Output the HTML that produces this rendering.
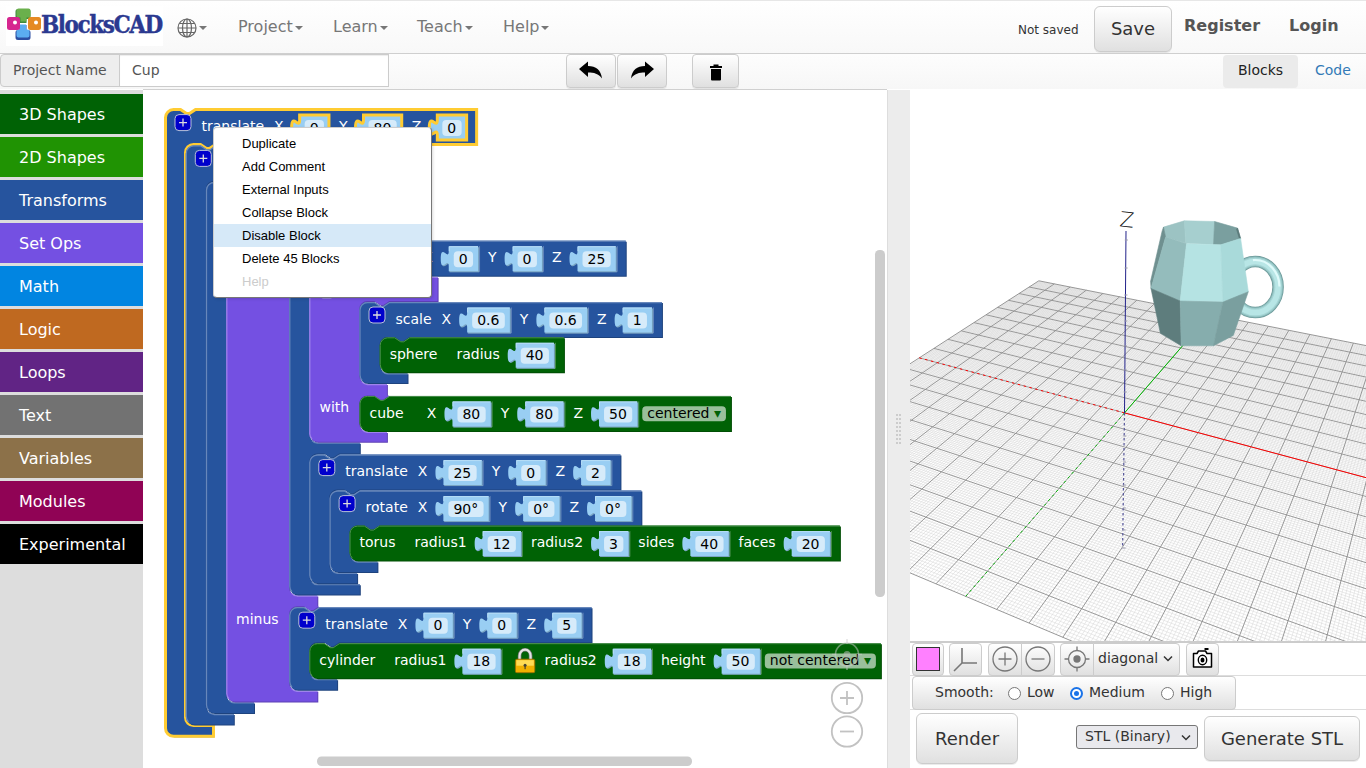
<!DOCTYPE html>
<html><head><meta charset="utf-8"><title>BlocksCAD</title>
<style>
*{box-sizing:border-box}
html,body{margin:0;padding:0;width:1366px;height:768px;overflow:hidden;background:#fff;font-family:"DejaVu Sans","Liberation Sans",sans-serif;font-size:14px;color:#333}
.abs{position:absolute}
#nav{position:absolute;left:0;top:0;width:1366px;height:54px;background:linear-gradient(#fff,#f8f8f8);border-top:1px solid #e7e7e7;border-bottom:1px solid #cfcfcf;box-shadow:0 1px 2px rgba(0,0,0,.12)}
#logo{position:absolute;left:6px;top:5px;width:157px;height:40px;background:#fff}
#logo .t{position:absolute;left:35px;top:4px;font-family:"DejaVu Serif Condensed","DejaVu Serif","Liberation Serif",serif;font-weight:bold;font-size:24px;letter-spacing:-1.45px;color:#2b3990;-webkit-text-stroke:.4px #2b3990;line-height:30px;white-space:nowrap}
.nv{position:absolute;top:15px;font-size:16px;color:#777;line-height:22px;white-space:nowrap}
.caret{display:inline-block;width:0;height:0;border-left:4px solid transparent;border-right:4px solid transparent;border-top:4px solid #777;vertical-align:middle;margin-left:2px}
.nb{position:absolute;top:14px;font-size:16px;font-weight:bold;color:#555;line-height:22px}
.btn{position:absolute;border:1px solid #ccc;border-radius:4px;background:linear-gradient(#fff,#e0e0e0);box-shadow:0 1px 0 rgba(0,0,0,.08);color:#333;text-align:center}
#bar2{position:absolute;left:0;top:54px;width:1366px;height:35px;background:linear-gradient(#fdfdfd,#f7f7f7)}
#pn{position:absolute;left:0;top:0px;width:120px;height:33px;border:1px solid #ccc;border-radius:4px 0 0 4px;background:#eee;color:#555;font-size:14px;line-height:31px;padding-left:12px}
#pi{position:absolute;left:119px;top:0px;width:270px;height:33px;border:1px solid #ccc;background:#fff;color:#555;font-size:14px;line-height:31px;padding-left:12px;box-shadow:inset 0 1px 1px rgba(0,0,0,.075)}
#main{position:absolute;left:0;top:90px;width:1366px;height:678px}
#side{position:absolute;left:0;top:0;width:143px;height:678px;background:#ddd}
.cat{position:absolute;left:0;width:143px;height:40px;color:#fff;font-size:16px;line-height:42px;padding-left:19px;overflow:hidden}
#ws{position:absolute;left:143px;top:-1px;width:744px;height:679px;background:#fff;overflow:hidden;border-top:1px solid #d0d0d0}
#div{position:absolute;left:887px;top:0;width:23px;height:678px;background:#ececec;border-left:1px solid #ddd}
#v3{position:absolute;left:910px;top:0;width:456px;height:552px;background:#fff;overflow:hidden}
.bt{font-family:"DejaVu Sans","Liberation Sans",sans-serif;font-size:14px}
#menu{position:absolute;left:213px;top:127px;width:219px;height:171px;background:#fff;border:1px solid #ccc;border-right-color:#777;border-bottom-color:#777;border-radius:4px;padding:4px 0;font-family:"Liberation Sans",sans-serif;font-size:13px;color:#000;box-shadow:1px 1px 3px rgba(0,0,0,.15)}
.mi{height:23px;line-height:23px;padding-left:28px;white-space:nowrap}
.mi.hl{background:#d6e9f8}
.mi.dis{color:#ccc}
#tb{position:absolute;left:910px;top:551px;width:456px;height:35px;border-top:2px solid #ccc;border-bottom:1px solid #ddd;background:#fff}
.tbtn{position:absolute;top:0px;height:33px;border:1px solid #ccc;background:linear-gradient(#fff,#e0e0e0);border-radius:4px}
#sm{position:absolute;left:912px;top:586px;width:324px;height:34px;border:1px solid #ccc;border-radius:4px;background:linear-gradient(#fff,#e0e0e0);font-size:14px;color:#333}
#sm span{position:absolute;top:6px;line-height:18px}
.radio{position:absolute;top:10px;width:13px;height:13px;border-radius:50%;border:1.5px solid #777;background:#fff}
.radio.on{border:2px solid #1a73e8}
.radio.on:after{content:"";position:absolute;left:2px;top:2px;width:5px;height:5px;border-radius:50%;background:#1a73e8}
select,.sel{position:absolute;font-family:"DejaVu Sans","Liberation Sans",sans-serif;font-size:14px;color:#333}
</style></head><body>
<div id="nav">
 <div id="logo">
  <svg class="abs" style="left:0;top:0" width="40" height="40" viewBox="0 0 40 40">
   <path d="M9.5 5.5 q0-2.5 2.5-2.5 h10 q2.5 0 2.5 2.5 v5 q0 2.5-2.5 2.5 h-1.5 v4 h-7 v-4 h-1.5 q-2.5 0-2.5-2.5z" fill="#3f8a3a"/>
   <path d="M10.5 4.5 q0-2 2-2 h10 q2 0 2 2 v5 q0 2-2 2 h-2 v4 h-6 v-4 h-2 q-2 0-2-2z" fill="#6ab04c"/>
   <path d="M9.5 31.5 q0 2.5 2.5 2.5 h10 q2.5 0 2.5-2.5 v-5 q0-2.5-2.5-2.5 h-1.5 v-5 h-7 v5 h-1.5 q-2.5 0-2.5 2.5z" fill="#2c4ea2"/>
   <path d="M10.5 29.5 q0 2 2 2 h9 q2 0 2-2 v-4 q0-2-2-2 h-1.5 v-5 h-6 v5 h-1.5 q-2 0-2 2z" fill="#5badf0"/>
   <rect x="1" y="11" width="13" height="13" rx="2.5" fill="#d6258f"/>
   <rect x="22" y="11" width="13" height="13" rx="2.5" fill="#e58a23"/>
   <circle cx="9" cy="16.5" r="2" fill="#fff"/><circle cx="30" cy="16.5" r="2" fill="#fff"/>
  </svg>
  <div class="t">BlocksCAD</div>
 </div>
 <svg class="abs" style="left:177px;top:17px" width="20" height="20" viewBox="0 0 20 20" fill="none" stroke="#666" stroke-width="1.2">
  <circle cx="10" cy="10" r="9"/><ellipse cx="10" cy="10" rx="4.5" ry="9"/><path d="M10 1v18M1 10h18M2.5 5.5h15M2.5 14.5h15"/>
 </svg>
 <span class="caret abs" style="left:199px;top:25px;margin:0"></span>
 <div class="nv" style="left:238px">Project<span class="caret"></span></div>
 <div class="nv" style="left:333px">Learn<span class="caret"></span></div>
 <div class="nv" style="left:417px">Teach<span class="caret"></span></div>
 <div class="nv" style="left:503px">Help<span class="caret"></span></div>
 <div class="abs" style="left:1018px;top:21px;font-size:12px;color:#333;line-height:16px">Not saved</div>
 <div class="btn" style="left:1094px;top:5px;width:78px;height:46px;border-radius:6px;font-size:18px;line-height:44px">Save</div>
 <div class="nb" style="left:1184px">Register</div>
 <div class="nb" style="left:1289px">Login</div>
</div>
<div id="bar2">
 <div id="pn">Project Name</div><div id="pi">Cup</div>
 <div class="btn" style="left:566px;top:0px;width:50px;height:34px">
  <svg width="30" height="22" viewBox="0 0 30 22" style="margin-top:5px"><path d="M3 9 L12 1.5 V6 C20 6 25 10 26 18.5 C22.5 13.5 18 12.5 12 12.5 V17 Z" fill="#000"/></svg></div>
 <div class="btn" style="left:617px;top:0px;width:50px;height:34px">
  <svg width="30" height="22" viewBox="0 0 30 22" style="margin-top:5px"><path d="M27 9 L18 1.5 V6 C10 6 5 10 4 18.5 C7.5 13.5 12 12.5 18 12.5 V17 Z" fill="#000"/></svg></div>
 <div class="btn" style="left:692px;top:0px;width:47px;height:34px">
  <svg width="14" height="18" viewBox="0 0 14 18" style="margin-top:8px"><path d="M1 3h12v2H1zM4.5 1.5h5v2h-5zM2 6h10v10.5q0 1-1 1H3q-1 0-1-1z" fill="#000"/></svg></div>
 <div class="abs" style="left:1223px;top:1px;width:75px;height:33px;background:#ebebeb;border-radius:4px;color:#222;font-size:14px;line-height:31px;text-align:center">Blocks</div>
 <div class="abs" style="left:1315px;top:1px;font-size:14px;line-height:31px;color:#337ab7">Code</div>
</div>
<div id="main">
 <div id="side">
 <div class="cat" style="top:4px;background:#006205">3D Shapes</div>
<div class="cat" style="top:47px;background:#209303">2D Shapes</div>
<div class="cat" style="top:90px;background:#26549E">Transforms</div>
<div class="cat" style="top:133px;background:#7450E2">Set Ops</div>
<div class="cat" style="top:176px;background:#0185E1">Math</div>
<div class="cat" style="top:219px;background:#BF6920">Logic</div>
<div class="cat" style="top:262px;background:#612485">Loops</div>
<div class="cat" style="top:305px;background:#727272">Text</div>
<div class="cat" style="top:348px;background:#8C7149">Variables</div>
<div class="cat" style="top:391px;background:#900355">Modules</div>
<div class="cat" style="top:434px;background:#000">Experimental</div>
 </div>
 <div id="ws">
  <svg class="abs" style="left:-143px;top:-90px" width="1030" height="768" viewBox="0 0 1030 768">
  <path d="M 165.5 117.6 A 8 8 0 0 1 173.5 109.6 H 180.5 l 6,4 3,0 6,-4 H 476.63 V 144.4 H 215.5 l -6,4 -3,0 -6,-4 H 193.5 a 8 8 0 0 0 -8 8 v 565.2 a 8 8 0 0 0 8 8 H 213.5 V 736.2 H 173.5 a 8 8 0 0 1 -8 -8 z" fill="#1e437e" transform="translate(1,1)"/>
<path d="M 165.5 117.6 A 8 8 0 0 1 173.5 109.6 H 180.5 l 6,4 3,0 6,-4 H 476.63 V 144.4 H 215.5 l -6,4 -3,0 -6,-4 H 193.5 a 8 8 0 0 0 -8 8 v 565.2 a 8 8 0 0 0 8 8 H 213.5 V 736.2 H 173.5 a 8 8 0 0 1 -8 -8 z" fill="#26549E" stroke="#fc3" stroke-width="3"/>
<rect x="175" y="114.6" width="16" height="16" rx="4" ry="4" fill="#00c" stroke="#b8c0d8" stroke-width="1"/><path d="M 179 122.6 h 8 M 183 118.6 v 8" stroke="#ddd" stroke-width="1.3" fill="none"/>
<text x="201.5" y="131.3" class="bt" fill="#fff">translate</text>
<text x="274.06" y="131.3" class="bt" fill="#fff">X</text>
<path d="M 299.65 115.1 H 328.96 V 140.1 H 299.65 V 135.1 c 0,-10 -8,8 -8,-7.5 s 8,2.5 8,-7.5 z" fill="#7aa5c2" transform="translate(1,1)"/>
<path d="M 299.65 115.1 H 328.96 V 140.1 H 299.65 V 135.1 c 0,-10 -8,8 -8,-7.5 s 8,2.5 8,-7.5 z" fill="#99CEF3" stroke="#fc3" stroke-width="3"/>
<rect x="304.65" y="120.1" width="19.31" height="16" rx="4" ry="4" fill="#fff" fill-opacity=".6"/>
<text x="309.65" y="132.6" class="bt" fill="#000">0</text>
<text x="338.96" y="131.3" class="bt" fill="#fff">Y</text>
<path d="M 363.51 115.1 H 401.73 V 140.1 H 363.51 V 135.1 c 0,-10 -8,8 -8,-7.5 s 8,2.5 8,-7.5 z" fill="#7aa5c2" transform="translate(1,1)"/>
<path d="M 363.51 115.1 H 401.73 V 140.1 H 363.51 V 135.1 c 0,-10 -8,8 -8,-7.5 s 8,2.5 8,-7.5 z" fill="#99CEF3" stroke="#fc3" stroke-width="3"/>
<rect x="368.51" y="120.1" width="28.21" height="16" rx="4" ry="4" fill="#fff" fill-opacity=".6"/>
<text x="373.51" y="132.6" class="bt" fill="#000">80</text>
<text x="411.73" y="131.3" class="bt" fill="#fff">Z</text>
<path d="M 437.32 115.1 H 466.63 V 140.1 H 437.32 V 135.1 c 0,-10 -8,8 -8,-7.5 s 8,2.5 8,-7.5 z" fill="#7aa5c2" transform="translate(1,1)"/>
<path d="M 437.32 115.1 H 466.63 V 140.1 H 437.32 V 135.1 c 0,-10 -8,8 -8,-7.5 s 8,2.5 8,-7.5 z" fill="#99CEF3" stroke="#fc3" stroke-width="3"/>
<rect x="442.32" y="120.1" width="19.31" height="16" rx="4" ry="4" fill="#fff" fill-opacity=".6"/>
<text x="447.32" y="132.6" class="bt" fill="#000">0</text>
<path d="M 185.8 153.4 A 8 8 0 0 1 193.8 145.4 H 200.8 l 6,4 3,0 6,-4 H 325.8 V 181 H 235.8 l -6,4 -3,0 -6,-4 H 213.8 a 8 8 0 0 0 -8 8 v 517 a 8 8 0 0 0 8 8 H 233.8 V 724.6 H 193.8 a 8 8 0 0 1 -8 -8 z" fill="#1e437e" transform="translate(1,1)"/>
<path d="M 185.8 153.4 A 8 8 0 0 1 193.8 145.4 H 200.8 l 6,4 3,0 6,-4 H 325.8 V 181 H 235.8 l -6,4 -3,0 -6,-4 H 213.8 a 8 8 0 0 0 -8 8 v 517 a 8 8 0 0 0 8 8 H 233.8 V 724.6 H 193.8 a 8 8 0 0 1 -8 -8 z" fill="#26549E"/>
<path d="M 186.3 153.4 A 7.5 7.5 0 0 1 193.8 145.9 H 200.8 l 6,4 3,0 6,-4 H 325.8 M 208.5 711.8 A 7.5 7.5 0 0 0 213.8 714.5 H 233.8 M 186.3 153.4 V 716.6 A 7.5 7.5 0 0 0 188.5 721.9" fill="none" stroke="#6787bb" stroke-width="1.25"/>
<rect x="195.3" y="150.4" width="16" height="16" rx="4" ry="4" fill="#00c" stroke="#b8c0d8" stroke-width="1"/><path d="M 199.3 158.4 h 8 M 203.3 154.4 v 8" stroke="#ddd" stroke-width="1.3" fill="none"/>
<text x="221.8" y="161.9" class="bt" fill="#fff">color</text>
<path d="M 206 190 A 8 8 0 0 1 214 182 H 221 l 6,4 3,0 6,-4 H 316 V 217 H 256 l -6,4 -3,0 -6,-4 H 234 a 8 8 0 0 0 -8 8 v 469.4 a 8 8 0 0 0 8 8 H 254 V 713 H 214 a 8 8 0 0 1 -8 -8 z" fill="#1e437e" transform="translate(1,1)"/>
<path d="M 206 190 A 8 8 0 0 1 214 182 H 221 l 6,4 3,0 6,-4 H 316 V 217 H 256 l -6,4 -3,0 -6,-4 H 234 a 8 8 0 0 0 -8 8 v 469.4 a 8 8 0 0 0 8 8 H 254 V 713 H 214 a 8 8 0 0 1 -8 -8 z" fill="#26549E"/>
<path d="M 206.5 190 A 7.5 7.5 0 0 1 214 182.5 H 221 l 6,4 3,0 6,-4 H 316 M 228.7 700.2 A 7.5 7.5 0 0 0 234 702.9 H 254 M 206.5 190 V 705 A 7.5 7.5 0 0 0 208.7 710.3" fill="none" stroke="#6787bb" stroke-width="1.25"/>
<rect x="215.5" y="187" width="16" height="16" rx="4" ry="4" fill="#00c" stroke="#b8c0d8" stroke-width="1"/><path d="M 219.5 195 h 8 M 223.5 191 v 8" stroke="#ddd" stroke-width="1.3" fill="none"/>
<text x="242" y="198.5" class="bt" fill="#fff">hull</text>
<path d="M 226.3 226 A 8 8 0 0 1 234.3 218 H 241.3 l 6,4 3,0 6,-4 H 366.3 V 239.7 H 319 l -6,4 -3,0 -6,-4 H 297 a 8 8 0 0 0 -8 8 v 339.8 a 8 8 0 0 0 8 8 H 317.3 V 606.2 H 319 l -6,4 -3,0 -6,-4 H 297 a 8 8 0 0 0 -8 8 v 68.6 a 8 8 0 0 0 8 8 H 317.3 V 701.4 H 234.3 a 8 8 0 0 1 -8 -8 z" fill="#5d40b5" transform="translate(1,1)"/>
<path d="M 226.3 226 A 8 8 0 0 1 234.3 218 H 241.3 l 6,4 3,0 6,-4 H 366.3 V 239.7 H 319 l -6,4 -3,0 -6,-4 H 297 a 8 8 0 0 0 -8 8 v 339.8 a 8 8 0 0 0 8 8 H 317.3 V 606.2 H 319 l -6,4 -3,0 -6,-4 H 297 a 8 8 0 0 0 -8 8 v 68.6 a 8 8 0 0 0 8 8 H 317.3 V 701.4 H 234.3 a 8 8 0 0 1 -8 -8 z" fill="#7450E2"/>
<path d="M 226.8 226 A 7.5 7.5 0 0 1 234.3 218.5 H 241.3 l 6,4 3,0 6,-4 H 366.3 M 291.7 593.3 A 7.5 7.5 0 0 0 297 596 H 317.3 M 291.7 688.6 A 7.5 7.5 0 0 0 297 691.3 H 317.3 M 226.8 226 V 693.4 A 7.5 7.5 0 0 0 229 698.7" fill="none" stroke="#9e84eb" stroke-width="1.25"/>
<rect x="235.8" y="223" width="16" height="16" rx="4" ry="4" fill="#00c" stroke="#b8c0d8" stroke-width="1"/><path d="M 239.8 231 h 8 M 243.8 227 v 8" stroke="#ddd" stroke-width="1.3" fill="none"/>
<text x="262.3" y="234.5" class="bt" fill="#fff">difference</text>
<text x="236" y="623.5" class="bt" fill="#fff">minus</text>
<path d="M 289.3 248.7 A 8 8 0 0 1 297.3 240.7 H 304.3 l 6,4 3,0 6,-4 H 625.73 V 275.7 H 339.3 l -6,4 -3,0 -6,-4 H 317.3 a 8 8 0 0 0 -8 8 v 151 a 8 8 0 0 0 8 8 H 359.8 V 453.6 H 339.3 l -6,4 -3,0 -6,-4 H 317.3 a 8 8 0 0 0 -8 8 v 114.6 a 8 8 0 0 0 8 8 H 359.8 V 594.5 H 297.3 a 8 8 0 0 1 -8 -8 z" fill="#1e437e" transform="translate(1,1)"/>
<path d="M 289.3 248.7 A 8 8 0 0 1 297.3 240.7 H 304.3 l 6,4 3,0 6,-4 H 625.73 V 275.7 H 339.3 l -6,4 -3,0 -6,-4 H 317.3 a 8 8 0 0 0 -8 8 v 151 a 8 8 0 0 0 8 8 H 359.8 V 453.6 H 339.3 l -6,4 -3,0 -6,-4 H 317.3 a 8 8 0 0 0 -8 8 v 114.6 a 8 8 0 0 0 8 8 H 359.8 V 594.5 H 297.3 a 8 8 0 0 1 -8 -8 z" fill="#26549E"/>
<path d="M 289.8 248.7 A 7.5 7.5 0 0 1 297.3 241.2 H 304.3 l 6,4 3,0 6,-4 H 625.73 M 312 440.5 A 7.5 7.5 0 0 0 317.3 443.2 H 359.8 M 312 582 A 7.5 7.5 0 0 0 317.3 584.7 H 359.8 M 289.8 248.7 V 586.5 A 7.5 7.5 0 0 0 292 591.8" fill="none" stroke="#6787bb" stroke-width="1.25"/>
<rect x="298.8" y="245.7" width="16" height="16" rx="4" ry="4" fill="#00c" stroke="#b8c0d8" stroke-width="1"/><path d="M 302.8 253.7 h 8 M 306.8 249.7 v 8" stroke="#ddd" stroke-width="1.3" fill="none"/>
<text x="325.3" y="262.4" class="bt" fill="#fff">translate</text>
<text x="423.16" y="262.4" class="bt" fill="#fff">X</text>
<path d="M 479.56 246.2 v 25.5 h -30.31" fill="none" stroke="#6787bb"/>
<path d="M 448.75 246.2 H 478.06 V 271.2 H 448.75 V 266.2 c 0,-10 -8,8 -8,-7.5 s 8,2.5 8,-7.5 z" fill="#7aa5c2" transform="translate(1,1)"/>
<path d="M 448.75 246.2 H 478.06 V 271.2 H 448.75 V 266.2 c 0,-10 -8,8 -8,-7.5 s 8,2.5 8,-7.5 z" fill="#99CEF3"/>
<path d="M 449.25 246.7 H 478.06 M 449.25 246.7 V 251.2" fill="none" stroke="#b8ddf7"/>
<rect x="453.75" y="251.2" width="19.31" height="16" rx="4" ry="4" fill="#fff" fill-opacity=".6"/>
<text x="458.75" y="263.7" class="bt" fill="#000">0</text>
<text x="488.06" y="262.4" class="bt" fill="#fff">Y</text>
<path d="M 543.42 246.2 v 25.5 h -30.31" fill="none" stroke="#6787bb"/>
<path d="M 512.61 246.2 H 541.92 V 271.2 H 512.61 V 266.2 c 0,-10 -8,8 -8,-7.5 s 8,2.5 8,-7.5 z" fill="#7aa5c2" transform="translate(1,1)"/>
<path d="M 512.61 246.2 H 541.92 V 271.2 H 512.61 V 266.2 c 0,-10 -8,8 -8,-7.5 s 8,2.5 8,-7.5 z" fill="#99CEF3"/>
<path d="M 513.11 246.7 H 541.92 M 513.11 246.7 V 251.2" fill="none" stroke="#b8ddf7"/>
<rect x="517.61" y="251.2" width="19.31" height="16" rx="4" ry="4" fill="#fff" fill-opacity=".6"/>
<text x="522.61" y="263.7" class="bt" fill="#000">0</text>
<text x="551.92" y="262.4" class="bt" fill="#fff">Z</text>
<path d="M 617.23 246.2 v 25.5 h -39.21" fill="none" stroke="#6787bb"/>
<path d="M 577.51 246.2 H 615.73 V 271.2 H 577.51 V 266.2 c 0,-10 -8,8 -8,-7.5 s 8,2.5 8,-7.5 z" fill="#7aa5c2" transform="translate(1,1)"/>
<path d="M 577.51 246.2 H 615.73 V 271.2 H 577.51 V 266.2 c 0,-10 -8,8 -8,-7.5 s 8,2.5 8,-7.5 z" fill="#99CEF3"/>
<path d="M 578.01 246.7 H 615.73 M 578.01 246.7 V 251.2" fill="none" stroke="#b8ddf7"/>
<rect x="582.51" y="251.2" width="28.21" height="16" rx="4" ry="4" fill="#fff" fill-opacity=".6"/>
<text x="587.51" y="263.7" class="bt" fill="#000">25</text>
<path d="M 309.3 284.9 A 8 8 0 0 1 317.3 276.9 H 324.3 l 6,4 3,0 6,-4 H 437.6 V 301 H 389.3 l -6,4 -3,0 -6,-4 H 367.3 a 8 8 0 0 0 -8 8 v 67.1 a 8 8 0 0 0 8 8 H 386.9 V 395.4 H 389.3 l -6,4 -3,0 -6,-4 H 367.3 a 8 8 0 0 0 -8 8 v 20.5 a 8 8 0 0 0 8 8 H 386.9 V 441.7 H 317.3 a 8 8 0 0 1 -8 -8 z" fill="#5d40b5" transform="translate(1,1)"/>
<path d="M 309.3 284.9 A 8 8 0 0 1 317.3 276.9 H 324.3 l 6,4 3,0 6,-4 H 437.6 V 301 H 389.3 l -6,4 -3,0 -6,-4 H 367.3 a 8 8 0 0 0 -8 8 v 67.1 a 8 8 0 0 0 8 8 H 386.9 V 395.4 H 389.3 l -6,4 -3,0 -6,-4 H 367.3 a 8 8 0 0 0 -8 8 v 20.5 a 8 8 0 0 0 8 8 H 386.9 V 441.7 H 317.3 a 8 8 0 0 1 -8 -8 z" fill="#7450E2"/>
<path d="M 309.8 284.9 A 7.5 7.5 0 0 1 317.3 277.4 H 324.3 l 6,4 3,0 6,-4 H 437.6 M 362 381.9 A 7.5 7.5 0 0 0 367.3 384.6 H 386.9 M 362 429.7 A 7.5 7.5 0 0 0 367.3 432.4 H 386.9 M 309.8 284.9 V 433.7 A 7.5 7.5 0 0 0 312 439" fill="none" stroke="#9e84eb" stroke-width="1.25"/>
<rect x="318.8" y="281.9" width="16" height="16" rx="4" ry="4" fill="#00c" stroke="#b8c0d8" stroke-width="1"/><path d="M 322.8 289.9 h 8 M 326.8 285.9 v 8" stroke="#ddd" stroke-width="1.3" fill="none"/>
<text x="345.3" y="293.4" class="bt" fill="#fff">intersection</text>
<text x="319.5" y="411.8" class="bt" fill="#fff">with</text>
<path d="M 359.5 310 A 8 8 0 0 1 367.5 302 H 374.5 l 6,4 3,0 6,-4 H 661.94 V 337 H 409.5 l -6,4 -3,0 -6,-4 H 387.5 a 8 8 0 0 0 -8 8 v 20.3 a 8 8 0 0 0 8 8 H 407.5 V 383.1 H 367.5 a 8 8 0 0 1 -8 -8 z" fill="#1e437e" transform="translate(1,1)"/>
<path d="M 359.5 310 A 8 8 0 0 1 367.5 302 H 374.5 l 6,4 3,0 6,-4 H 661.94 V 337 H 409.5 l -6,4 -3,0 -6,-4 H 387.5 a 8 8 0 0 0 -8 8 v 20.3 a 8 8 0 0 0 8 8 H 407.5 V 383.1 H 367.5 a 8 8 0 0 1 -8 -8 z" fill="#26549E"/>
<path d="M 360 310 A 7.5 7.5 0 0 1 367.5 302.5 H 374.5 l 6,4 3,0 6,-4 H 661.94 M 382.2 371.1 A 7.5 7.5 0 0 0 387.5 373.8 H 407.5 M 360 310 V 375.1 A 7.5 7.5 0 0 0 362.2 380.4" fill="none" stroke="#6787bb" stroke-width="1.25"/>
<rect x="369" y="307" width="16" height="16" rx="4" ry="4" fill="#00c" stroke="#b8c0d8" stroke-width="1"/><path d="M 373 315 h 8 M 377 311 v 8" stroke="#ddd" stroke-width="1.3" fill="none"/>
<text x="395.5" y="323.7" class="bt" fill="#fff">scale</text>
<text x="441.57" y="323.7" class="bt" fill="#fff">X</text>
<path d="M 511.33 307.5 v 25.5 h -43.66" fill="none" stroke="#6787bb"/>
<path d="M 467.16 307.5 H 509.83 V 332.5 H 467.16 V 327.5 c 0,-10 -8,8 -8,-7.5 s 8,2.5 8,-7.5 z" fill="#7aa5c2" transform="translate(1,1)"/>
<path d="M 467.16 307.5 H 509.83 V 332.5 H 467.16 V 327.5 c 0,-10 -8,8 -8,-7.5 s 8,2.5 8,-7.5 z" fill="#99CEF3"/>
<path d="M 467.66 308 H 509.83 M 467.66 308 V 312.5" fill="none" stroke="#b8ddf7"/>
<rect x="472.16" y="312.5" width="32.66" height="16" rx="4" ry="4" fill="#fff" fill-opacity=".6"/>
<text x="477.16" y="325" class="bt" fill="#000">0.6</text>
<text x="519.83" y="323.7" class="bt" fill="#fff">Y</text>
<path d="M 588.55 307.5 v 25.5 h -43.66" fill="none" stroke="#6787bb"/>
<path d="M 544.38 307.5 H 587.05 V 332.5 H 544.38 V 327.5 c 0,-10 -8,8 -8,-7.5 s 8,2.5 8,-7.5 z" fill="#7aa5c2" transform="translate(1,1)"/>
<path d="M 544.38 307.5 H 587.05 V 332.5 H 544.38 V 327.5 c 0,-10 -8,8 -8,-7.5 s 8,2.5 8,-7.5 z" fill="#99CEF3"/>
<path d="M 544.88 308 H 587.05 M 544.88 308 V 312.5" fill="none" stroke="#b8ddf7"/>
<rect x="549.38" y="312.5" width="32.66" height="16" rx="4" ry="4" fill="#fff" fill-opacity=".6"/>
<text x="554.38" y="325" class="bt" fill="#000">0.6</text>
<text x="597.05" y="323.7" class="bt" fill="#fff">Z</text>
<path d="M 653.44 307.5 v 25.5 h -30.31" fill="none" stroke="#6787bb"/>
<path d="M 622.64 307.5 H 651.94 V 332.5 H 622.64 V 327.5 c 0,-10 -8,8 -8,-7.5 s 8,2.5 8,-7.5 z" fill="#7aa5c2" transform="translate(1,1)"/>
<path d="M 622.64 307.5 H 651.94 V 332.5 H 622.64 V 327.5 c 0,-10 -8,8 -8,-7.5 s 8,2.5 8,-7.5 z" fill="#99CEF3"/>
<path d="M 623.14 308 H 651.94 M 623.14 308 V 312.5" fill="none" stroke="#b8ddf7"/>
<rect x="627.64" y="312.5" width="19.31" height="16" rx="4" ry="4" fill="#fff" fill-opacity=".6"/>
<text x="632.64" y="325" class="bt" fill="#000">1</text>
<path d="M 379.7 345.3 A 8 8 0 0 1 387.7 337.3 H 394.7 l 6,4 3,0 6,-4 H 563.92 V 372.3 H 387.7 a 8 8 0 0 1 -8 -8 z" fill="#004e04" transform="translate(1,1)"/>
<path d="M 379.7 345.3 A 8 8 0 0 1 387.7 337.3 H 394.7 l 6,4 3,0 6,-4 H 563.92 V 372.3 H 387.7 a 8 8 0 0 1 -8 -8 z" fill="#006205"/>
<path d="M 380.2 345.3 A 7.5 7.5 0 0 1 387.7 337.8 H 394.7 l 6,4 3,0 6,-4 H 563.92 M 380.2 345.3 V 364.3 A 7.5 7.5 0 0 0 382.4 369.6" fill="none" stroke="#4c9150"/>
<text x="389.7" y="359" class="bt" fill="#fff">sphere</text>
<text x="456.43" y="359" class="bt" fill="#fff">radius</text>
<path d="M 555.42 342.8 v 25.5 h -39.21" fill="none" stroke="#4c9150"/>
<path d="M 515.71 342.8 H 553.92 V 367.8 H 515.71 V 362.8 c 0,-10 -8,8 -8,-7.5 s 8,2.5 8,-7.5 z" fill="#7aa5c2" transform="translate(1,1)"/>
<path d="M 515.71 342.8 H 553.92 V 367.8 H 515.71 V 362.8 c 0,-10 -8,8 -8,-7.5 s 8,2.5 8,-7.5 z" fill="#99CEF3"/>
<path d="M 516.21 343.3 H 553.92 M 516.21 343.3 V 347.8" fill="none" stroke="#b8ddf7"/>
<rect x="520.71" y="347.8" width="28.21" height="16" rx="4" ry="4" fill="#fff" fill-opacity=".6"/>
<text x="525.71" y="360.3" class="bt" fill="#000">40</text>
<path d="M 359.5 403.9 A 8 8 0 0 1 367.5 395.9 H 374.5 l 6,4 3,0 6,-4 H 730.93 V 430.9 H 367.5 a 8 8 0 0 1 -8 -8 z" fill="#004e04" transform="translate(1,1)"/>
<path d="M 359.5 403.9 A 8 8 0 0 1 367.5 395.9 H 374.5 l 6,4 3,0 6,-4 H 730.93 V 430.9 H 367.5 a 8 8 0 0 1 -8 -8 z" fill="#006205"/>
<path d="M 360 403.9 A 7.5 7.5 0 0 1 367.5 396.4 H 374.5 l 6,4 3,0 6,-4 H 730.93 M 360 403.9 V 422.9 A 7.5 7.5 0 0 0 362.2 428.2" fill="none" stroke="#4c9150"/>
<text x="369.5" y="417.6" class="bt" fill="#fff">cube</text>
<text x="426.87" y="417.6" class="bt" fill="#fff">X</text>
<path d="M 492.18 401.4 v 25.5 h -39.21" fill="none" stroke="#4c9150"/>
<path d="M 452.46 401.4 H 490.68 V 426.4 H 452.46 V 421.4 c 0,-10 -8,8 -8,-7.5 s 8,2.5 8,-7.5 z" fill="#7aa5c2" transform="translate(1,1)"/>
<path d="M 452.46 401.4 H 490.68 V 426.4 H 452.46 V 421.4 c 0,-10 -8,8 -8,-7.5 s 8,2.5 8,-7.5 z" fill="#99CEF3"/>
<path d="M 452.96 401.9 H 490.68 M 452.96 401.9 V 406.4" fill="none" stroke="#b8ddf7"/>
<rect x="457.46" y="406.4" width="28.21" height="16" rx="4" ry="4" fill="#fff" fill-opacity=".6"/>
<text x="462.46" y="418.9" class="bt" fill="#000">80</text>
<text x="500.68" y="417.6" class="bt" fill="#fff">Y</text>
<path d="M 564.94 401.4 v 25.5 h -39.21" fill="none" stroke="#4c9150"/>
<path d="M 525.23 401.4 H 563.44 V 426.4 H 525.23 V 421.4 c 0,-10 -8,8 -8,-7.5 s 8,2.5 8,-7.5 z" fill="#7aa5c2" transform="translate(1,1)"/>
<path d="M 525.23 401.4 H 563.44 V 426.4 H 525.23 V 421.4 c 0,-10 -8,8 -8,-7.5 s 8,2.5 8,-7.5 z" fill="#99CEF3"/>
<path d="M 525.73 401.9 H 563.44 M 525.73 401.9 V 406.4" fill="none" stroke="#b8ddf7"/>
<rect x="530.23" y="406.4" width="28.21" height="16" rx="4" ry="4" fill="#fff" fill-opacity=".6"/>
<text x="535.23" y="418.9" class="bt" fill="#000">80</text>
<text x="573.44" y="417.6" class="bt" fill="#fff">Z</text>
<path d="M 638.75 401.4 v 25.5 h -39.21" fill="none" stroke="#4c9150"/>
<path d="M 599.03 401.4 H 637.25 V 426.4 H 599.03 V 421.4 c 0,-10 -8,8 -8,-7.5 s 8,2.5 8,-7.5 z" fill="#7aa5c2" transform="translate(1,1)"/>
<path d="M 599.03 401.4 H 637.25 V 426.4 H 599.03 V 421.4 c 0,-10 -8,8 -8,-7.5 s 8,2.5 8,-7.5 z" fill="#99CEF3"/>
<path d="M 599.53 401.9 H 637.25 M 599.53 401.9 V 406.4" fill="none" stroke="#b8ddf7"/>
<rect x="604.03" y="406.4" width="28.21" height="16" rx="4" ry="4" fill="#fff" fill-opacity=".6"/>
<text x="609.03" y="418.9" class="bt" fill="#000">50</text>
<rect x="642.25" y="406.2" width="83.69" height="15" rx="4" ry="4" fill="#fff" fill-opacity=".6"/>
<text x="647.25" y="418.1" class="bt" fill="#000">centered<tspan fill="#006205"> ▾</tspan></text>
<path d="M 309.3 462.6 A 8 8 0 0 1 317.3 454.6 H 324.3 l 6,4 3,0 6,-4 H 620.43 V 489.6 H 359.3 l -6,4 -3,0 -6,-4 H 337.3 a 8 8 0 0 0 -8 8 v 67.3 a 8 8 0 0 0 8 8 H 357.1 V 583.2 H 317.3 a 8 8 0 0 1 -8 -8 z" fill="#1e437e" transform="translate(1,1)"/>
<path d="M 309.3 462.6 A 8 8 0 0 1 317.3 454.6 H 324.3 l 6,4 3,0 6,-4 H 620.43 V 489.6 H 359.3 l -6,4 -3,0 -6,-4 H 337.3 a 8 8 0 0 0 -8 8 v 67.3 a 8 8 0 0 0 8 8 H 357.1 V 583.2 H 317.3 a 8 8 0 0 1 -8 -8 z" fill="#26549E"/>
<path d="M 309.8 462.6 A 7.5 7.5 0 0 1 317.3 455.1 H 324.3 l 6,4 3,0 6,-4 H 620.43 M 332 570.7 A 7.5 7.5 0 0 0 337.3 573.4 H 357.1 M 309.8 462.6 V 575.2 A 7.5 7.5 0 0 0 312 580.5" fill="none" stroke="#6787bb" stroke-width="1.25"/>
<rect x="318.8" y="459.6" width="16" height="16" rx="4" ry="4" fill="#00c" stroke="#b8c0d8" stroke-width="1"/><path d="M 322.8 467.6 h 8 M 326.8 463.6 v 8" stroke="#ddd" stroke-width="1.3" fill="none"/>
<text x="345.3" y="476.3" class="bt" fill="#fff">translate</text>
<text x="417.86" y="476.3" class="bt" fill="#fff">X</text>
<path d="M 483.17 460.1 v 25.5 h -39.21" fill="none" stroke="#6787bb"/>
<path d="M 443.45 460.1 H 481.67 V 485.1 H 443.45 V 480.1 c 0,-10 -8,8 -8,-7.5 s 8,2.5 8,-7.5 z" fill="#7aa5c2" transform="translate(1,1)"/>
<path d="M 443.45 460.1 H 481.67 V 485.1 H 443.45 V 480.1 c 0,-10 -8,8 -8,-7.5 s 8,2.5 8,-7.5 z" fill="#99CEF3"/>
<path d="M 443.95 460.6 H 481.67 M 443.95 460.6 V 465.1" fill="none" stroke="#b8ddf7"/>
<rect x="448.45" y="465.1" width="28.21" height="16" rx="4" ry="4" fill="#fff" fill-opacity=".6"/>
<text x="453.45" y="477.6" class="bt" fill="#000">25</text>
<text x="491.67" y="476.3" class="bt" fill="#fff">Y</text>
<path d="M 547.03 460.1 v 25.5 h -30.31" fill="none" stroke="#6787bb"/>
<path d="M 516.22 460.1 H 545.53 V 485.1 H 516.22 V 480.1 c 0,-10 -8,8 -8,-7.5 s 8,2.5 8,-7.5 z" fill="#7aa5c2" transform="translate(1,1)"/>
<path d="M 516.22 460.1 H 545.53 V 485.1 H 516.22 V 480.1 c 0,-10 -8,8 -8,-7.5 s 8,2.5 8,-7.5 z" fill="#99CEF3"/>
<path d="M 516.72 460.6 H 545.53 M 516.72 460.6 V 465.1" fill="none" stroke="#b8ddf7"/>
<rect x="521.22" y="465.1" width="19.31" height="16" rx="4" ry="4" fill="#fff" fill-opacity=".6"/>
<text x="526.22" y="477.6" class="bt" fill="#000">0</text>
<text x="555.53" y="476.3" class="bt" fill="#fff">Z</text>
<path d="M 611.93 460.1 v 25.5 h -30.31" fill="none" stroke="#6787bb"/>
<path d="M 581.12 460.1 H 610.43 V 485.1 H 581.12 V 480.1 c 0,-10 -8,8 -8,-7.5 s 8,2.5 8,-7.5 z" fill="#7aa5c2" transform="translate(1,1)"/>
<path d="M 581.12 460.1 H 610.43 V 485.1 H 581.12 V 480.1 c 0,-10 -8,8 -8,-7.5 s 8,2.5 8,-7.5 z" fill="#99CEF3"/>
<path d="M 581.62 460.6 H 610.43 M 581.62 460.6 V 465.1" fill="none" stroke="#b8ddf7"/>
<rect x="586.12" y="465.1" width="19.31" height="16" rx="4" ry="4" fill="#fff" fill-opacity=".6"/>
<text x="591.12" y="477.6" class="bt" fill="#000">2</text>
<path d="M 329.6 498.6 A 8 8 0 0 1 337.6 490.6 H 344.6 l 6,4 3,0 6,-4 H 641.35 V 525.6 H 379.6 l -6,4 -3,0 -6,-4 H 357.6 a 8 8 0 0 0 -8 8 v 20 a 8 8 0 0 0 8 8 H 377.4 V 571.9 H 337.6 a 8 8 0 0 1 -8 -8 z" fill="#1e437e" transform="translate(1,1)"/>
<path d="M 329.6 498.6 A 8 8 0 0 1 337.6 490.6 H 344.6 l 6,4 3,0 6,-4 H 641.35 V 525.6 H 379.6 l -6,4 -3,0 -6,-4 H 357.6 a 8 8 0 0 0 -8 8 v 20 a 8 8 0 0 0 8 8 H 377.4 V 571.9 H 337.6 a 8 8 0 0 1 -8 -8 z" fill="#26549E"/>
<path d="M 330.1 498.6 A 7.5 7.5 0 0 1 337.6 491.1 H 344.6 l 6,4 3,0 6,-4 H 641.35 M 352.3 559.4 A 7.5 7.5 0 0 0 357.6 562.1 H 377.4 M 330.1 498.6 V 563.9 A 7.5 7.5 0 0 0 332.3 569.2" fill="none" stroke="#6787bb" stroke-width="1.25"/>
<rect x="339.1" y="495.6" width="16" height="16" rx="4" ry="4" fill="#00c" stroke="#b8c0d8" stroke-width="1"/><path d="M 343.1 503.6 h 8 M 347.1 499.6 v 8" stroke="#ddd" stroke-width="1.3" fill="none"/>
<text x="365.6" y="512.3" class="bt" fill="#fff">rotate</text>
<text x="417.78" y="512.3" class="bt" fill="#fff">X</text>
<path d="M 490.09 496.1 v 25.5 h -46.21" fill="none" stroke="#6787bb"/>
<path d="M 443.38 496.1 H 488.59 V 521.1 H 443.38 V 516.1 c 0,-10 -8,8 -8,-7.5 s 8,2.5 8,-7.5 z" fill="#7aa5c2" transform="translate(1,1)"/>
<path d="M 443.38 496.1 H 488.59 V 521.1 H 443.38 V 516.1 c 0,-10 -8,8 -8,-7.5 s 8,2.5 8,-7.5 z" fill="#99CEF3"/>
<path d="M 443.88 496.6 H 488.59 M 443.88 496.6 V 501.1" fill="none" stroke="#b8ddf7"/>
<rect x="448.38" y="501.1" width="35.21" height="16" rx="4" ry="4" fill="#fff" fill-opacity=".6"/>
<text x="453.38" y="513.6" class="bt" fill="#000">90°</text>
<text x="498.59" y="512.3" class="bt" fill="#fff">Y</text>
<path d="M 560.95 496.1 v 25.5 h -37.31" fill="none" stroke="#6787bb"/>
<path d="M 523.14 496.1 H 559.45 V 521.1 H 523.14 V 516.1 c 0,-10 -8,8 -8,-7.5 s 8,2.5 8,-7.5 z" fill="#7aa5c2" transform="translate(1,1)"/>
<path d="M 523.14 496.1 H 559.45 V 521.1 H 523.14 V 516.1 c 0,-10 -8,8 -8,-7.5 s 8,2.5 8,-7.5 z" fill="#99CEF3"/>
<path d="M 523.64 496.6 H 559.45 M 523.64 496.6 V 501.1" fill="none" stroke="#b8ddf7"/>
<rect x="528.14" y="501.1" width="26.31" height="16" rx="4" ry="4" fill="#fff" fill-opacity=".6"/>
<text x="533.14" y="513.6" class="bt" fill="#000">0°</text>
<text x="569.45" y="512.3" class="bt" fill="#fff">Z</text>
<path d="M 632.85 496.1 v 25.5 h -37.31" fill="none" stroke="#6787bb"/>
<path d="M 595.04 496.1 H 631.35 V 521.1 H 595.04 V 516.1 c 0,-10 -8,8 -8,-7.5 s 8,2.5 8,-7.5 z" fill="#7aa5c2" transform="translate(1,1)"/>
<path d="M 595.04 496.1 H 631.35 V 521.1 H 595.04 V 516.1 c 0,-10 -8,8 -8,-7.5 s 8,2.5 8,-7.5 z" fill="#99CEF3"/>
<path d="M 595.54 496.6 H 631.35 M 595.54 496.6 V 501.1" fill="none" stroke="#b8ddf7"/>
<rect x="600.04" y="501.1" width="26.31" height="16" rx="4" ry="4" fill="#fff" fill-opacity=".6"/>
<text x="605.04" y="513.6" class="bt" fill="#000">0°</text>
<path d="M 349.5 533.6 A 8 8 0 0 1 357.5 525.6 H 364.5 l 6,4 3,0 6,-4 H 839.89 V 560.6 H 357.5 a 8 8 0 0 1 -8 -8 z" fill="#004e04" transform="translate(1,1)"/>
<path d="M 349.5 533.6 A 8 8 0 0 1 357.5 525.6 H 364.5 l 6,4 3,0 6,-4 H 839.89 V 560.6 H 357.5 a 8 8 0 0 1 -8 -8 z" fill="#006205"/>
<path d="M 350 533.6 A 7.5 7.5 0 0 1 357.5 526.1 H 364.5 l 6,4 3,0 6,-4 H 839.89 M 350 533.6 V 552.6 A 7.5 7.5 0 0 0 352.2 557.9" fill="none" stroke="#4c9150"/>
<text x="359.5" y="547.3" class="bt" fill="#fff">torus</text>
<text x="414.48" y="547.3" class="bt" fill="#fff">radius1</text>
<path d="M 522.38 531.1 v 25.5 h -39.21" fill="none" stroke="#4c9150"/>
<path d="M 482.66 531.1 H 520.88 V 556.1 H 482.66 V 551.1 c 0,-10 -8,8 -8,-7.5 s 8,2.5 8,-7.5 z" fill="#7aa5c2" transform="translate(1,1)"/>
<path d="M 482.66 531.1 H 520.88 V 556.1 H 482.66 V 551.1 c 0,-10 -8,8 -8,-7.5 s 8,2.5 8,-7.5 z" fill="#99CEF3"/>
<path d="M 483.16 531.6 H 520.88 M 483.16 531.6 V 536.1" fill="none" stroke="#b8ddf7"/>
<rect x="487.66" y="536.1" width="28.21" height="16" rx="4" ry="4" fill="#fff" fill-opacity=".6"/>
<text x="492.66" y="548.6" class="bt" fill="#000">12</text>
<text x="530.88" y="547.3" class="bt" fill="#fff">radius2</text>
<path d="M 629.87 531.1 v 25.5 h -30.31" fill="none" stroke="#4c9150"/>
<path d="M 599.06 531.1 H 628.37 V 556.1 H 599.06 V 551.1 c 0,-10 -8,8 -8,-7.5 s 8,2.5 8,-7.5 z" fill="#7aa5c2" transform="translate(1,1)"/>
<path d="M 599.06 531.1 H 628.37 V 556.1 H 599.06 V 551.1 c 0,-10 -8,8 -8,-7.5 s 8,2.5 8,-7.5 z" fill="#99CEF3"/>
<path d="M 599.56 531.6 H 628.37 M 599.56 531.6 V 536.1" fill="none" stroke="#b8ddf7"/>
<rect x="604.06" y="536.1" width="19.31" height="16" rx="4" ry="4" fill="#fff" fill-opacity=".6"/>
<text x="609.06" y="548.6" class="bt" fill="#000">3</text>
<text x="638.37" y="547.3" class="bt" fill="#fff">sides</text>
<path d="M 730.06 531.1 v 25.5 h -39.21" fill="none" stroke="#4c9150"/>
<path d="M 690.35 531.1 H 728.56 V 556.1 H 690.35 V 551.1 c 0,-10 -8,8 -8,-7.5 s 8,2.5 8,-7.5 z" fill="#7aa5c2" transform="translate(1,1)"/>
<path d="M 690.35 531.1 H 728.56 V 556.1 H 690.35 V 551.1 c 0,-10 -8,8 -8,-7.5 s 8,2.5 8,-7.5 z" fill="#99CEF3"/>
<path d="M 690.85 531.6 H 728.56 M 690.85 531.6 V 536.1" fill="none" stroke="#b8ddf7"/>
<rect x="695.35" y="536.1" width="28.21" height="16" rx="4" ry="4" fill="#fff" fill-opacity=".6"/>
<text x="700.35" y="548.6" class="bt" fill="#000">40</text>
<text x="738.56" y="547.3" class="bt" fill="#fff">faces</text>
<path d="M 831.39 531.1 v 25.5 h -39.21" fill="none" stroke="#4c9150"/>
<path d="M 791.68 531.1 H 829.89 V 556.1 H 791.68 V 551.1 c 0,-10 -8,8 -8,-7.5 s 8,2.5 8,-7.5 z" fill="#7aa5c2" transform="translate(1,1)"/>
<path d="M 791.68 531.1 H 829.89 V 556.1 H 791.68 V 551.1 c 0,-10 -8,8 -8,-7.5 s 8,2.5 8,-7.5 z" fill="#99CEF3"/>
<path d="M 792.18 531.6 H 829.89 M 792.18 531.6 V 536.1" fill="none" stroke="#b8ddf7"/>
<rect x="796.68" y="536.1" width="28.21" height="16" rx="4" ry="4" fill="#fff" fill-opacity=".6"/>
<text x="801.68" y="548.6" class="bt" fill="#000">20</text>
<path d="M 289.3 615.2 A 8 8 0 0 1 297.3 607.2 H 304.3 l 6,4 3,0 6,-4 H 591.52 V 642.2 H 339.3 l -6,4 -3,0 -6,-4 H 317.3 a 8 8 0 0 0 -8 8 v 21 a 8 8 0 0 0 8 8 H 337.1 V 689.8 H 297.3 a 8 8 0 0 1 -8 -8 z" fill="#1e437e" transform="translate(1,1)"/>
<path d="M 289.3 615.2 A 8 8 0 0 1 297.3 607.2 H 304.3 l 6,4 3,0 6,-4 H 591.52 V 642.2 H 339.3 l -6,4 -3,0 -6,-4 H 317.3 a 8 8 0 0 0 -8 8 v 21 a 8 8 0 0 0 8 8 H 337.1 V 689.8 H 297.3 a 8 8 0 0 1 -8 -8 z" fill="#26549E"/>
<path d="M 289.8 615.2 A 7.5 7.5 0 0 1 297.3 607.7 H 304.3 l 6,4 3,0 6,-4 H 591.52 M 312 677 A 7.5 7.5 0 0 0 317.3 679.7 H 337.1 M 289.8 615.2 V 681.8 A 7.5 7.5 0 0 0 292 687.1" fill="none" stroke="#6787bb" stroke-width="1.25"/>
<rect x="298.8" y="612.2" width="16" height="16" rx="4" ry="4" fill="#00c" stroke="#b8c0d8" stroke-width="1"/><path d="M 302.8 620.2 h 8 M 306.8 616.2 v 8" stroke="#ddd" stroke-width="1.3" fill="none"/>
<text x="325.3" y="628.9" class="bt" fill="#fff">translate</text>
<text x="397.86" y="628.9" class="bt" fill="#fff">X</text>
<path d="M 454.26 612.7 v 25.5 h -30.31" fill="none" stroke="#6787bb"/>
<path d="M 423.45 612.7 H 452.76 V 637.7 H 423.45 V 632.7 c 0,-10 -8,8 -8,-7.5 s 8,2.5 8,-7.5 z" fill="#7aa5c2" transform="translate(1,1)"/>
<path d="M 423.45 612.7 H 452.76 V 637.7 H 423.45 V 632.7 c 0,-10 -8,8 -8,-7.5 s 8,2.5 8,-7.5 z" fill="#99CEF3"/>
<path d="M 423.95 613.2 H 452.76 M 423.95 613.2 V 617.7" fill="none" stroke="#b8ddf7"/>
<rect x="428.45" y="617.7" width="19.31" height="16" rx="4" ry="4" fill="#fff" fill-opacity=".6"/>
<text x="433.45" y="630.2" class="bt" fill="#000">0</text>
<text x="462.76" y="628.9" class="bt" fill="#fff">Y</text>
<path d="M 518.12 612.7 v 25.5 h -30.31" fill="none" stroke="#6787bb"/>
<path d="M 487.31 612.7 H 516.62 V 637.7 H 487.31 V 632.7 c 0,-10 -8,8 -8,-7.5 s 8,2.5 8,-7.5 z" fill="#7aa5c2" transform="translate(1,1)"/>
<path d="M 487.31 612.7 H 516.62 V 637.7 H 487.31 V 632.7 c 0,-10 -8,8 -8,-7.5 s 8,2.5 8,-7.5 z" fill="#99CEF3"/>
<path d="M 487.81 613.2 H 516.62 M 487.81 613.2 V 617.7" fill="none" stroke="#b8ddf7"/>
<rect x="492.31" y="617.7" width="19.31" height="16" rx="4" ry="4" fill="#fff" fill-opacity=".6"/>
<text x="497.31" y="630.2" class="bt" fill="#000">0</text>
<text x="526.62" y="628.9" class="bt" fill="#fff">Z</text>
<path d="M 583.02 612.7 v 25.5 h -30.31" fill="none" stroke="#6787bb"/>
<path d="M 552.21 612.7 H 581.52 V 637.7 H 552.21 V 632.7 c 0,-10 -8,8 -8,-7.5 s 8,2.5 8,-7.5 z" fill="#7aa5c2" transform="translate(1,1)"/>
<path d="M 552.21 612.7 H 581.52 V 637.7 H 552.21 V 632.7 c 0,-10 -8,8 -8,-7.5 s 8,2.5 8,-7.5 z" fill="#99CEF3"/>
<path d="M 552.71 613.2 H 581.52 M 552.71 613.2 V 617.7" fill="none" stroke="#b8ddf7"/>
<rect x="557.21" y="617.7" width="19.31" height="16" rx="4" ry="4" fill="#fff" fill-opacity=".6"/>
<text x="562.21" y="630.2" class="bt" fill="#000">5</text>
<path d="M 309.3 651.2 A 8 8 0 0 1 317.3 643.2 H 324.3 l 6,4 3,0 6,-4 H 880.89 V 678.2 H 317.3 a 8 8 0 0 1 -8 -8 z" fill="#004e04" transform="translate(1,1)"/>
<path d="M 309.3 651.2 A 8 8 0 0 1 317.3 643.2 H 324.3 l 6,4 3,0 6,-4 H 880.89 V 678.2 H 317.3 a 8 8 0 0 1 -8 -8 z" fill="#006205"/>
<path d="M 309.8 651.2 A 7.5 7.5 0 0 1 317.3 643.7 H 324.3 l 6,4 3,0 6,-4 H 880.89 M 309.8 651.2 V 670.2 A 7.5 7.5 0 0 0 312 675.5" fill="none" stroke="#4c9150"/>
<text x="319.3" y="664.9" class="bt" fill="#fff">cylinder</text>
<text x="394.19" y="664.9" class="bt" fill="#fff">radius1</text>
<path d="M 502.09 648.7 v 25.5 h -39.21" fill="none" stroke="#4c9150"/>
<path d="M 462.38 648.7 H 500.59 V 673.7 H 462.38 V 668.7 c 0,-10 -8,8 -8,-7.5 s 8,2.5 8,-7.5 z" fill="#7aa5c2" transform="translate(1,1)"/>
<path d="M 462.38 648.7 H 500.59 V 673.7 H 462.38 V 668.7 c 0,-10 -8,8 -8,-7.5 s 8,2.5 8,-7.5 z" fill="#99CEF3"/>
<path d="M 462.88 649.2 H 500.59 M 462.88 649.2 V 653.7" fill="none" stroke="#b8ddf7"/>
<rect x="467.38" y="653.7" width="28.21" height="16" rx="4" ry="4" fill="#fff" fill-opacity=".6"/>
<text x="472.38" y="666.2" class="bt" fill="#000">18</text>
<g transform="translate(514.59,648.7)"><path d="M5 11 V7 a5.5 6 0 0 1 11 0 V11" fill="none" stroke="#777" stroke-width="3.6"/><path d="M5 11 V7 a5.5 6 0 0 1 11 0 V11" fill="none" stroke="#e4e4e4" stroke-width="2.2"/><rect x="0.8" y="10.5" width="19.4" height="13.5" rx="1.5" fill="#f2b100" stroke="#9a6a00" stroke-width=".8"/><rect x="1.8" y="11.5" width="17.4" height="5.5" fill="#ffdc55"/><circle cx="10.5" cy="16.5" r="1.5" fill="#443"/><rect x="9.9" y="16.5" width="1.2" height="4" fill="#443"/></g>
<text x="544.59" y="664.9" class="bt" fill="#fff">radius2</text>
<path d="M 652.49 648.7 v 25.5 h -39.21" fill="none" stroke="#4c9150"/>
<path d="M 612.78 648.7 H 650.99 V 673.7 H 612.78 V 668.7 c 0,-10 -8,8 -8,-7.5 s 8,2.5 8,-7.5 z" fill="#7aa5c2" transform="translate(1,1)"/>
<path d="M 612.78 648.7 H 650.99 V 673.7 H 612.78 V 668.7 c 0,-10 -8,8 -8,-7.5 s 8,2.5 8,-7.5 z" fill="#99CEF3"/>
<path d="M 613.28 649.2 H 650.99 M 613.28 649.2 V 653.7" fill="none" stroke="#b8ddf7"/>
<rect x="617.78" y="653.7" width="28.21" height="16" rx="4" ry="4" fill="#fff" fill-opacity=".6"/>
<text x="622.78" y="666.2" class="bt" fill="#000">18</text>
<text x="660.99" y="664.9" class="bt" fill="#fff">height</text>
<path d="M 761.33 648.7 v 25.5 h -39.21" fill="none" stroke="#4c9150"/>
<path d="M 721.62 648.7 H 759.83 V 673.7 H 721.62 V 668.7 c 0,-10 -8,8 -8,-7.5 s 8,2.5 8,-7.5 z" fill="#7aa5c2" transform="translate(1,1)"/>
<path d="M 721.62 648.7 H 759.83 V 673.7 H 721.62 V 668.7 c 0,-10 -8,8 -8,-7.5 s 8,2.5 8,-7.5 z" fill="#99CEF3"/>
<path d="M 722.12 649.2 H 759.83 M 722.12 649.2 V 653.7" fill="none" stroke="#b8ddf7"/>
<rect x="726.62" y="653.7" width="28.21" height="16" rx="4" ry="4" fill="#fff" fill-opacity=".6"/>
<text x="731.62" y="666.2" class="bt" fill="#000">50</text>
<rect x="764.83" y="653.5" width="111.06" height="15" rx="4" ry="4" fill="#fff" fill-opacity=".6"/>
<text x="769.83" y="665.4" class="bt" fill="#000">not centered<tspan fill="#006205"> ▾</tspan></text>
  <g fill="none" stroke="#c2c2c2" stroke-width="1.8">
   <circle cx="847" cy="698" r="15.200" fill="#fff"/><path d="M840 698h14M847 691v14"/>
   <circle cx="847" cy="731.5" r="15.200" fill="#fff"/><path d="M840 731.5h14"/>
  </g>
  <g fill="none" stroke="#ccc" stroke-opacity=".5" stroke-width="1.6"><circle cx="847" cy="654.5" r="11.5"/><path d="M847 639v5M847 665v5M832 654.5h4M858 654.5h4"/></g>
  <circle cx="847" cy="654.5" r="3.5" fill="#bbb" fill-opacity=".55"/>
  <rect x="875" y="250" width="10" height="347" rx="4.5" fill="#ccc"/>
  <rect x="317" y="756.5" width="375" height="9.5" rx="4.5" fill="#ccc"/>
  </svg>
  <div id="menu" style="left:70px;top:37px">
  <div class="mi">Duplicate</div>
<div class="mi">Add Comment</div>
<div class="mi">External Inputs</div>
<div class="mi">Collapse Block</div>
<div class="mi hl">Disable Block</div>
<div class="mi">Delete 45 Blocks</div>
<div class="mi dis">Help</div>
  </div>
 </div>
 <div id="div">
  <svg class="abs" style="left:8px;top:324px" width="6" height="32"><g fill="#ccc"><rect x="0" y="0" width="2" height="2"/><rect x="3" y="0" width="2" height="2"/><rect x="0" y="4" width="2" height="2"/><rect x="3" y="4" width="2" height="2"/><rect x="0" y="8" width="2" height="2"/><rect x="3" y="8" width="2" height="2"/><rect x="0" y="12" width="2" height="2"/><rect x="3" y="12" width="2" height="2"/><rect x="0" y="16" width="2" height="2"/><rect x="3" y="16" width="2" height="2"/><rect x="0" y="20" width="2" height="2"/><rect x="3" y="20" width="2" height="2"/><rect x="0" y="24" width="2" height="2"/><rect x="3" y="24" width="2" height="2"/><rect x="0" y="28" width="2" height="2"/><rect x="3" y="28" width="2" height="2"/></g></svg>
 </div>
 <div id="v3">
  <svg width="456" height="552" viewBox="0 0 456 552">
  <defs><filter id="bl"><feGaussianBlur stdDeviation=".7"/></filter><linearGradient id="hg" x1="0" y1="0" x2="1" y2="1"><stop offset="0" stop-color="#d8f4f4"/><stop offset=".45" stop-color="#b5e3e3"/><stop offset="1" stop-color="#7fb0b0"/></linearGradient></defs>
  <polygon points="-196.1,400.2 438.0,667.5 512.7,266.8 128.8,190.8" fill="#fff"/>
<path d="M-194.0 401.1L130.3 191.1M-193.3 398.4L438.8 663.3M-191.9 402.0L131.8 191.4M-190.6 396.6L439.6 659.2M-189.8 402.9L133.4 191.7M-187.8 394.9L440.3 655.1M-187.7 403.8L134.9 192.0M-185.1 393.1L441.1 651.1M-185.6 404.7L136.5 192.3M-182.4 391.4L441.8 647.1M-183.5 405.6L138.1 192.6M-179.7 389.7L442.6 643.1M-181.3 406.5L139.6 192.9M-177.1 387.9L443.3 639.2M-179.2 407.4L141.2 193.2M-174.4 386.2L444.0 635.4M-177.0 408.3L142.7 193.6M-171.8 384.5L444.7 631.5M-172.7 410.1L145.9 194.2M-166.6 381.2L446.1 624.0M-170.5 411.0L147.4 194.5M-164.0 379.5L446.8 620.3M-168.3 411.9L149.0 194.8M-161.5 377.9L447.5 616.6M-166.2 412.8L150.6 195.1M-158.9 376.2L448.2 613.0M-164.0 413.8L152.2 195.4M-156.4 374.6L448.9 609.4M-161.8 414.7L153.8 195.7M-153.9 373.0L449.5 605.8M-159.5 415.6L155.4 196.1M-151.4 371.4L450.2 602.3M-157.3 416.6L157.0 196.4M-148.9 369.8L450.8 598.8M-155.1 417.5L158.6 196.7M-146.5 368.2L451.5 595.4M-150.6 419.4L161.8 197.3M-141.6 365.1L452.7 588.6M-148.4 420.3L163.4 197.6M-139.2 363.5L453.4 585.2M-146.1 421.3L165.0 198.0M-136.8 362.0L454.0 581.9M-143.8 422.2L166.6 198.3M-134.5 360.5L454.6 578.6M-141.6 423.2L168.2 198.6M-132.1 358.9L455.2 575.3M-139.3 424.2L169.8 198.9M-129.8 357.4L455.8 572.1M-137.0 425.1L171.4 199.2M-127.4 355.9L456.4 568.9M-134.7 426.1L173.1 199.6M-125.1 354.4L457.0 565.7M-132.4 427.1L174.7 199.9M-122.8 353.0L457.6 562.6M-127.7 429.0L178.0 200.5M-118.3 350.0L458.7 556.4M-125.4 430.0L179.6 200.8M-116.0 348.6L459.3 553.4M-123.1 431.0L181.3 201.2M-113.8 347.1L459.9 550.3M-120.7 432.0L182.9 201.5M-111.6 345.7L460.4 547.4M-118.4 433.0L184.6 201.8M-109.3 344.3L461.0 544.4M-116.0 434.0L186.2 202.2M-107.2 342.9L461.5 541.4M-113.6 435.0L187.9 202.5M-105.0 341.5L462.1 538.5M-111.2 436.0L189.5 202.8M-102.8 340.1L462.6 535.6M-108.8 437.0L191.2 203.1M-100.6 338.7L463.1 532.8M-104.0 439.0L194.5 203.8M-96.4 335.9L464.2 527.1M-101.6 440.0L196.2 204.1M-94.3 334.6L464.7 524.4M-99.2 441.1L197.9 204.5M-92.2 333.2L465.2 521.6M-96.8 442.1L199.6 204.8M-90.1 331.9L465.7 518.9M-94.3 443.1L201.2 205.1M-88.0 330.5L466.2 516.1M-91.8 444.2L202.9 205.5M-85.9 329.2L466.7 513.5M-89.4 445.2L204.6 205.8M-83.9 327.9L467.2 510.8M-86.9 446.2L206.3 206.1M-81.9 326.6L467.7 508.2M-84.4 447.3L208.0 206.5M-79.8 325.3L468.2 505.5M-79.4 449.4L211.4 207.1M-75.8 322.7L469.2 500.4M-76.9 450.5L213.1 207.5M-73.8 321.4L469.7 497.8M-74.4 451.5L214.8 207.8M-71.9 320.1L470.1 495.3M-71.9 452.6L216.6 208.2M-69.9 318.8L470.6 492.8M-69.3 453.6L218.3 208.5M-67.9 317.6L471.1 490.3M-66.8 454.7L220.0 208.8M-66.0 316.3L471.5 487.8M-64.2 455.8L221.7 209.2M-64.1 315.1L472.0 485.4M-61.7 456.9L223.5 209.5M-62.2 313.9L472.4 482.9M-59.1 458.0L225.2 209.9M-60.2 312.6L472.9 480.5M-53.9 460.2L228.7 210.6M-56.5 310.2L473.8 475.8M-51.3 461.3L230.4 210.9M-54.6 309.0L474.2 473.4M-48.7 462.4L232.2 211.2M-52.7 307.8L474.6 471.1M-46.0 463.5L233.9 211.6M-50.9 306.6L475.1 468.8M-43.4 464.6L235.7 211.9M-49.0 305.4L475.5 466.5M-40.8 465.7L237.4 212.3M-47.2 304.2L475.9 464.2M-38.1 466.8L239.2 212.6M-45.4 303.1L476.3 462.0M-35.4 467.9L241.0 213.0M-43.6 301.9L476.8 459.7M-32.8 469.1L242.7 213.3M-41.8 300.7L477.2 457.5M-27.4 471.3L246.3 214.0M-38.2 298.4L478.0 453.1M-24.7 472.5L248.1 214.4M-36.5 297.3L478.4 450.9M-21.9 473.6L249.9 214.7M-34.7 296.2L478.8 448.8M-19.2 474.8L251.6 215.1M-33.0 295.0L479.2 446.7M-16.5 475.9L253.4 215.5M-31.2 293.9L479.6 444.5M-13.7 477.1L255.2 215.8M-29.5 292.8L480.0 442.4M-11.0 478.3L257.0 216.2M-27.8 291.7L480.4 440.4M-8.2 479.4L258.8 216.5M-26.1 290.6L480.8 438.3M-5.4 480.6L260.7 216.9M-24.4 289.5L481.1 436.2M0.2 483.0L264.3 217.6M-21.0 287.3L481.9 432.2M3.0 484.1L266.1 218.0M-19.3 286.3L482.3 430.2M5.9 485.3L267.9 218.3M-17.7 285.2L482.6 428.2M8.7 486.5L269.8 218.7M-16.0 284.1L483.0 426.2M11.5 487.7L271.6 219.0M-14.4 283.1L483.4 424.2M14.4 488.9L273.4 219.4M-12.7 282.0L483.7 422.3M17.3 490.2L275.3 219.8M-11.1 281.0L484.1 420.3M20.2 491.4L277.1 220.1M-9.5 279.9L484.5 418.4M23.1 492.6L279.0 220.5M-7.9 278.9L484.8 416.5M28.9 495.0L282.7 221.2M-4.7 276.8L485.5 412.7M31.8 496.3L284.5 221.6M-3.1 275.8L485.9 410.9M34.8 497.5L286.4 222.0M-1.5 274.8L486.2 409.0M37.7 498.8L288.3 222.3M0.0 273.8L486.6 407.2M40.7 500.0L290.2 222.7M1.6 272.8L486.9 405.4M43.7 501.3L292.0 223.1M3.1 271.8L487.2 403.6M46.7 502.5L293.9 223.5M4.7 270.8L487.6 401.8M49.7 503.8L295.8 223.8M6.2 269.8L487.9 400.0M52.7 505.1L297.7 224.2M7.7 268.8L488.2 398.2M58.8 507.6L301.5 225.0M10.7 266.9L488.9 394.7M61.8 508.9L303.4 225.3M12.2 265.9L489.2 393.0M64.9 510.2L305.3 225.7M13.7 264.9L489.5 391.2M68.0 511.5L307.2 226.1M15.2 264.0L489.8 389.5M71.1 512.8L309.1 226.5M16.7 263.0L490.2 387.8M74.2 514.1L311.0 226.9M18.2 262.1L490.5 386.1M77.3 515.4L313.0 227.2M19.6 261.1L490.8 384.5M80.4 516.8L314.9 227.6M21.1 260.2L491.1 382.8M83.6 518.1L316.8 228.0M22.5 259.3L491.4 381.1M89.9 520.8L320.7 228.8M25.4 257.4L492.0 377.9M93.1 522.1L322.6 229.1M26.8 256.5L492.3 376.2M96.3 523.4L324.6 229.5M28.2 255.6L492.6 374.6M99.5 524.8L326.5 229.9M29.6 254.7L492.9 373.0M102.7 526.2L328.5 230.3M31.0 253.8L493.2 371.4M106.0 527.5L330.5 230.7M32.4 252.9L493.5 369.9M109.2 528.9L332.4 231.1M33.8 252.0L493.8 368.3M112.5 530.3L334.4 231.5M35.2 251.1L494.1 366.7M115.8 531.7L336.4 231.9M36.6 250.2L494.4 365.2M122.4 534.4L340.4 232.7M39.3 248.5L495.0 362.1M125.7 535.8L342.3 233.0M40.7 247.6L495.2 360.6M129.0 537.2L344.3 233.4M42.0 246.7L495.5 359.1M132.4 538.7L346.3 233.8M43.3 245.9L495.8 357.6M135.8 540.1L348.3 234.2M44.7 245.0L496.1 356.1M139.2 541.5L350.3 234.6M46.0 244.1L496.3 354.7M142.5 542.9L352.4 235.0M47.3 243.3L496.6 353.2M146.0 544.4L354.4 235.4M48.6 242.4L496.9 351.7M149.4 545.8L356.4 235.8M49.9 241.6L497.2 350.3M156.3 548.7L360.5 236.6M52.5 239.9L497.7 347.4M159.8 550.2L362.5 237.0M53.8 239.1L498.0 346.0M163.2 551.7L364.5 237.4M55.1 238.3L498.2 344.6M166.7 553.1L366.6 237.8M56.4 237.5L498.5 343.2M170.3 554.6L368.6 238.2M57.6 236.6L498.7 341.8M173.8 556.1L370.7 238.7M58.9 235.8L499.0 340.4M177.3 557.6L372.7 239.1M60.2 235.0L499.3 339.0M180.9 559.1L374.8 239.5M61.4 234.2L499.5 337.7M184.5 560.6L376.9 239.9M62.7 233.4L499.8 336.3M191.7 563.7L381.0 240.7M65.1 231.8L500.3 333.6M195.3 565.2L383.1 241.1M66.4 231.0L500.5 332.3M199.0 566.7L385.2 241.5M67.6 230.2L500.8 330.9M202.6 568.3L387.3 241.9M68.8 229.4L501.0 329.6M206.3 569.8L389.4 242.4M70.0 228.7L501.3 328.3M210.0 571.4L391.5 242.8M71.2 227.9L501.5 327.0M213.7 572.9L393.6 243.2M72.4 227.1L501.7 325.7M217.5 574.5L395.7 243.6M73.6 226.3L502.0 324.4M221.2 576.1L397.8 244.0M74.8 225.6L502.2 323.1M228.8 579.3L402.1 244.9M77.1 224.1L502.7 320.6M232.6 580.9L404.2 245.3M78.3 223.3L502.9 319.4M236.4 582.5L406.3 245.7M79.5 222.6L503.2 318.1M240.2 584.1L408.5 246.1M80.6 221.8L503.4 316.9M244.1 585.7L410.6 246.6M81.8 221.1L503.6 315.6M247.9 587.3L412.8 247.0M82.9 220.3L503.9 314.4M251.8 589.0L414.9 247.4M84.1 219.6L504.1 313.2M255.7 590.6L417.1 247.8M85.2 218.9L504.3 312.0M259.6 592.3L419.3 248.3M86.4 218.1L504.5 310.8M267.5 595.6L423.6 249.1M88.6 216.7L505.0 308.4M271.5 597.3L425.8 249.6M89.7 215.9L505.2 307.2M275.5 599.0L428.0 250.0M90.8 215.2L505.4 306.0M279.5 600.7L430.2 250.4M92.0 214.5L505.6 304.8M283.6 602.4L432.4 250.9M93.1 213.8L505.9 303.7M287.6 604.1L434.6 251.3M94.2 213.1L506.1 302.5M291.7 605.8L436.8 251.7M95.3 212.4L506.3 301.4M295.8 607.5L439.0 252.2M96.3 211.7L506.5 300.2M299.9 609.3L441.2 252.6M97.4 211.0L506.7 299.1M308.2 612.7L445.7 253.5M99.6 209.6L507.1 296.8M312.4 614.5L447.9 253.9M100.6 208.9L507.3 295.7M316.6 616.3L450.1 254.4M101.7 208.2L507.5 294.6M320.8 618.1L452.4 254.8M102.8 207.5L507.7 293.5M325.0 619.8L454.6 255.3M103.8 206.9L508.0 292.4M329.3 621.6L456.9 255.7M104.9 206.2L508.2 291.3M333.6 623.4L459.2 256.2M105.9 205.5L508.4 290.2M337.9 625.2L461.4 256.6M107.0 204.8L508.6 289.1M342.2 627.1L463.7 257.1M108.0 204.2L508.8 288.1M350.9 630.7L468.3 258.0M110.1 202.8L509.2 285.9M355.3 632.6L470.6 258.4M111.1 202.2L509.4 284.9M359.7 634.4L472.8 258.9M112.1 201.5L509.6 283.8M364.1 636.3L475.1 259.3M113.1 200.9L509.7 282.8M368.5 638.2L477.5 259.8M114.1 200.2L509.9 281.7M373.0 640.1L479.8 260.2M115.1 199.6L510.1 280.7M377.5 642.0L482.1 260.7M116.1 198.9L510.3 279.7M382.0 643.9L484.4 261.2M117.1 198.3L510.5 278.6M386.6 645.8L486.7 261.6M118.1 197.7L510.7 277.6M395.7 649.6L491.4 262.5M120.1 196.4L511.1 275.6M400.3 651.6L493.8 263.0M121.1 195.7L511.3 274.6M405.0 653.5L496.1 263.5M122.0 195.1L511.5 273.6M409.6 655.5L498.5 263.9M123.0 194.5L511.6 272.6M414.3 657.4L500.8 264.4M124.0 193.9L511.8 271.6M419.0 659.4L503.2 264.9M125.0 193.2L512.0 270.6M423.7 661.4L505.6 265.3M125.9 192.6L512.2 269.7M428.5 663.4L508.0 265.8M126.9 192.0L512.4 268.7M433.2 665.4L510.3 266.3M127.8 191.4L512.6 267.7" stroke="#d4d4d4" stroke-width=".5" fill="none"/>
<path d="M-196.1 400.2L128.8 190.8M-196.1 400.2L438.0 667.5M-174.9 409.2L144.3 193.9M-169.2 382.9L445.4 627.8M-152.9 418.4L160.2 197.0M-144.0 366.7L452.1 591.9M-130.1 428.1L176.3 200.2M-120.5 351.5L458.2 559.5M-106.4 438.0L192.9 203.5M-98.5 337.3L463.7 530.0M-81.9 448.3L209.7 206.8M-77.8 324.0L468.7 502.9M-56.5 459.1L226.9 210.2M-58.4 311.4L473.3 478.1M-30.1 470.2L244.5 213.7M-40.0 299.6L477.6 455.3M-2.6 481.8L262.5 217.2M-22.7 288.4L481.5 434.2M26.0 493.8L280.8 220.9M-6.3 277.8L485.2 414.6M55.7 506.4L299.6 224.6M9.2 267.8L488.6 396.4M86.7 519.4L318.8 228.4M24.0 258.4L491.7 379.5M119.1 533.0L338.4 232.3M37.9 249.3L494.7 363.7M152.8 547.3L358.4 236.2M51.2 240.8L497.4 348.8M188.1 562.1L378.9 240.3M63.9 232.6L500.0 334.9M225.0 577.7L399.9 244.4M76.0 224.8L502.5 321.9M263.6 593.9L421.4 248.7M87.5 217.4L504.8 309.6M304.1 611.0L443.4 253.0M98.5 210.3L506.9 298.0M346.5 628.9L466.0 257.5M109.0 203.5L509.0 287.0M391.1 647.7L489.1 262.1M119.1 197.0L510.9 276.6M438.0 667.5L512.7 266.8M128.8 190.8L512.7 266.8" stroke="#8c8c8c" stroke-width=".9" fill="none"/>
<path d="M214.5 322.9L488.6 396.4" stroke="#f00" stroke-width="1"/>
<path d="M214.5 322.9L9.2 267.8" stroke="#f00" stroke-width="1" stroke-dasharray="2.5 3.5"/>
<path d="M214.5 322.9L299.6 224.6" stroke="#0b0" stroke-width="1"/>
<path d="M214.5 322.9L55.7 506.4" stroke="#0b0" stroke-width="1" stroke-dasharray="2.5 3.5"/>
<path d="M214.5 322.9L216 141" stroke="#22228a" stroke-width="1"/>
<path d="M214.5 322.9L212.6 458.3" stroke="#55559a" stroke-width="1.2" stroke-dasharray="2.5 2.5"/>
<path d="M214.8 150.0 h3" stroke="#99a" stroke-width="1"/>
<path d="M214.6 178.0 h3" stroke="#99a" stroke-width="1"/>
<path d="M214.4 205.0 h3" stroke="#99a" stroke-width="1"/>
<path d="M214.2 231.0 h3" stroke="#99a" stroke-width="1"/>
<path d="M214.0 256.0 h3" stroke="#99a" stroke-width="1"/>
<path d="M213.8 280.0 h3" stroke="#99a" stroke-width="1"/>
<path d="M213.7 302.0 h3" stroke="#99a" stroke-width="1"/>
<path d="M213.3 346.0 h3" stroke="#99a" stroke-width="1"/>
<path d="M213.1 372.0 h3" stroke="#99a" stroke-width="1"/>
<path d="M212.9 395.0 h3" stroke="#99a" stroke-width="1"/>
<path d="M212.8 418.0 h3" stroke="#99a" stroke-width="1"/>
<path d="M212.6 440.0 h3" stroke="#99a" stroke-width="1"/>
<path d="M212.5 458.0 h3" stroke="#99a" stroke-width="1"/>
<text x="210" y="137" font-size="21" fill="#111" font-family="'DejaVu Sans','Liberation Sans',sans-serif" font-weight="200" transform="rotate(6 216 128)" style="font-stretch:condensed">Z</text>
<ellipse cx="345.2" cy="197.0" rx="22.9" ry="25.6" fill="none" stroke="#6d9a9a" stroke-width="11.5"/>
<ellipse cx="345.2" cy="197.0" rx="22.9" ry="25.6" fill="none" stroke="#8dbdbd" stroke-width="10"/>
<ellipse cx="345.2" cy="197.0" rx="22.9" ry="25.6" fill="none" stroke="#a5d5d5" stroke-width="8"/>
<ellipse cx="345.2" cy="197.0" rx="22.9" ry="25.6" fill="none" stroke="#b8e6e6" stroke-width="5.5"/>
<ellipse cx="345.2" cy="197.0" rx="24.3" ry="27" fill="none" stroke="#e8ffff" stroke-opacity=".8" stroke-width="2.2" stroke-dasharray="42 300" stroke-dashoffset="-118" filter="url(#bl)"/>
<polygon points="253.5,137.1 274.4,130.8 275.8,153.3 255.6,147.1" fill="#9cc3c3" stroke="#9cc3c3" stroke-width=".6"/>
<polygon points="274.4,130.8 304.6,131.5 303.5,154.4 275.8,153.3" fill="#a6cfcf" stroke="#a6cfcf" stroke-width=".6"/>
<polygon points="304.6,131.5 327.5,138.1 330.6,148.5 310.8,154.8 303.5,154.4" fill="#7a9f9f" stroke="#7a9f9f" stroke-width=".6"/>
<polygon points="327.5,138.1 330.6,148.5 329.2,148.1 326.5,139.2" fill="#5c7a7a" stroke="#5c7a7a" stroke-width=".6"/>
<polygon points="253.5,137.1 255.6,147.1 241.0,198.5 240.6,191.2 252.1,141.2" fill="#6f9090" stroke="#6f9090" stroke-width=".6"/>
<polygon points="255.6,147.1 276.5,153.8 270.2,211.0 241.0,198.5" fill="#94bcbc" stroke="#94bcbc" stroke-width=".6"/>
<polygon points="276.5,153.8 310.8,154.8 312.9,212.1 270.2,211.0" fill="#b5e3e3" stroke="#b5e3e3" stroke-width=".6"/>
<polygon points="310.8,154.8 330.6,148.5 338.3,201.7 312.9,212.1" fill="#a9dada" stroke="#a9dada" stroke-width=".6"/>
<polygon points="241.0,198.5 270.2,211.0 271.2,255.8 250.4,243.3" fill="#5e7d7d" stroke="#5e7d7d" stroke-width=".6"/>
<polygon points="270.2,211.0 312.9,212.1 303.5,255.8 271.2,255.8" fill="#86adad" stroke="#86adad" stroke-width=".6"/>
<polygon points="312.9,212.1 338.3,201.7 323.3,245.4 303.5,255.8" fill="#7a9f9f" stroke="#7a9f9f" stroke-width=".6"/>
  </svg>
 </div>
 <div id="tb">
  <div class="tbtn" style="left:2px;width:32px"><div class="abs" style="left:3px;top:3px;width:24px;height:24px;background:#ff80ff;border:1px solid #333"></div></div>
  <div class="tbtn" style="left:39px;width:33px"><svg width="31" height="30" viewBox="0 0 31 30"><path d="M12 4V19L4 27M12 19H27" stroke="#777" stroke-width="1.6" fill="none"/></svg></div>
  <div class="tbtn" style="left:78px;width:34px;border-radius:4px 0 0 4px"><svg width="32" height="30" viewBox="0 0 32 30" fill="none" stroke="#777" stroke-width="1.3"><circle cx="16" cy="15" r="12"/><path d="M9.5 15h13M16 8.5v13"/></svg></div>
  <div class="tbtn" style="left:111px;width:34px;border-radius:0 4px 4px 0"><svg width="32" height="30" viewBox="0 0 32 30" fill="none" stroke="#777" stroke-width="1.3"><circle cx="16" cy="15" r="12"/><path d="M9.5 15h13"/></svg></div>
  <div class="tbtn" style="left:150px;width:34px;border-radius:4px 0 0 4px"><svg width="32" height="30" viewBox="0 0 32 30" fill="none" stroke="#777" stroke-width="1.3"><circle cx="16" cy="15" r="8.5"/><circle cx="16" cy="15" r="3" fill="#777"/><path d="M16 2.5v4M16 23.5v4M3.5 15h4M24.5 15h4"/></svg></div>
  <div class="tbtn" style="left:183px;width:87px;border-radius:0 4px 4px 0;font-size:14px;line-height:28px;padding-left:4px;color:#333">diagonal<svg class="abs" style="left:69px;top:11px" width="10" height="8"><path d="M1 1.5l4 4 4-4" stroke="#333" stroke-width="1.5" fill="none"/></svg></div>
  <div class="tbtn" style="left:276px;width:33px"><svg width="31" height="31" viewBox="0 0 31 31"><path d="M6.5 9.5h3.5l1.5-2.5h7l1.5 2.5h4.5v13.5h-18z" fill="#fff" stroke="#000" stroke-width="1.5" stroke-linejoin="round"/><rect x="17.5" y="4" width="4" height="2" fill="#000"/><ellipse cx="15.5" cy="16" rx="4.200" ry="4.800" fill="#fff" stroke="#000" stroke-width="1.400"/><ellipse cx="15.5" cy="16" rx="2" ry="2.5" fill="#000"/></svg></div>
 </div>
 <div class="abs" style="left:910px;top:619px;width:456px;height:1px;background:#ddd"></div>
 <div id="sm"><span style="left:22px">Smooth:</span><div class="radio" style="left:95px"></div><span style="left:114px">Low</span>
  <div class="radio on" style="left:157px"></div><span style="left:176px">Medium</span><div class="radio" style="left:248px"></div><span style="left:267px">High</span></div>
 <div class="btn" style="left:916px;top:623px;width:102px;height:51px;border-radius:6px;font-size:18px;line-height:49px">Render</div>
 <div class="abs" style="left:1076px;top:635px;width:122px;height:24px;border:1px solid #767676;border-radius:3px;background:#e9e9ed;font-size:14px;line-height:21px;padding-left:8px;color:#333">STL (Binary)<svg class="abs" style="left:104px;top:8px" width="10" height="8"><path d="M1 1.5l4 4 4-4" stroke="#333" stroke-width="1.5" fill="none"/></svg></div>
 <div class="btn" style="left:1204px;top:626px;width:156px;height:45px;border-radius:6px;font-size:18px;line-height:43px">Generate STL</div>
</div>
</body></html>
